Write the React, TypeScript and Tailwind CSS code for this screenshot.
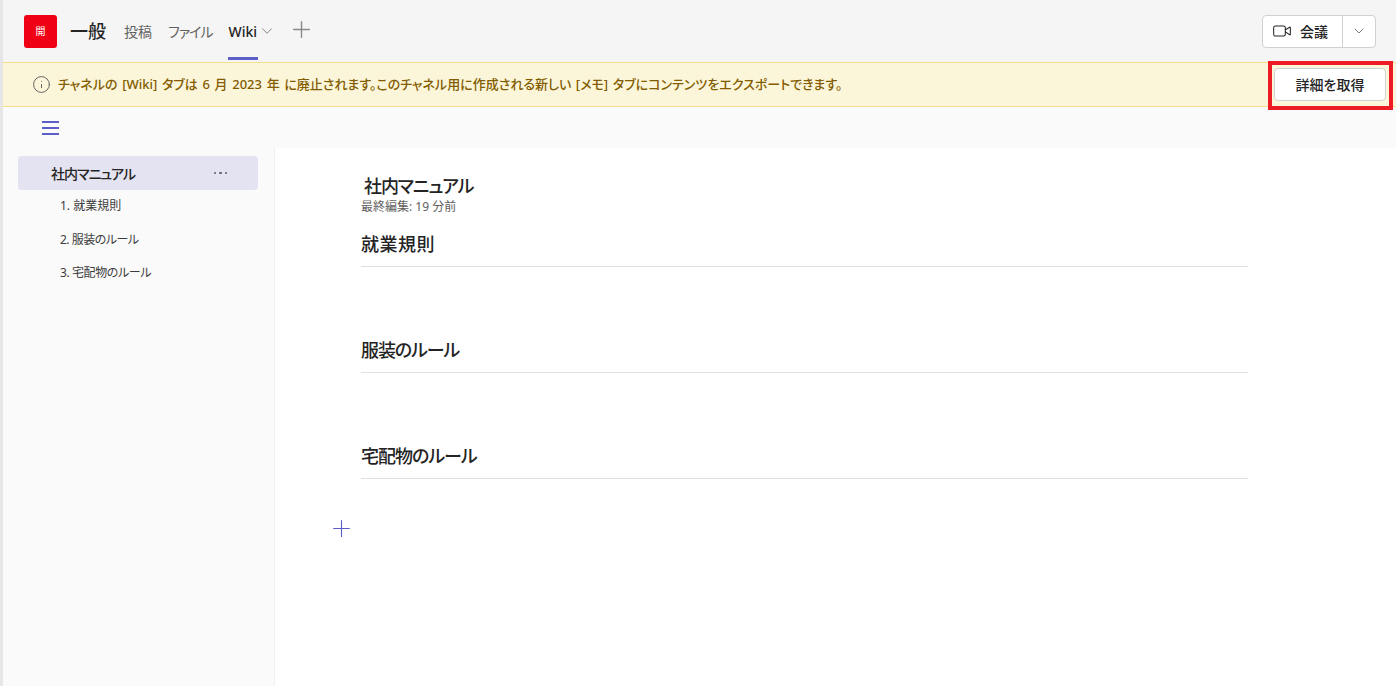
import { ChevronDown, Plus, Video, Info } from "lucide-react";

const font = "font-['Noto_Sans','Noto_Sans_CJK_JP',sans-serif] [font-feature-settings:'palt']";

const Header = () => {
    return (
        <div className="h-[62px] shrink-0 bg-[#f5f5f5] flex items-center justify-between pl-[21px] pr-5">
            <div className="flex items-center h-full">
                <div className="w-[33px] h-[33px] rounded-[3px] bg-[#f00014] text-white text-[10px] flex items-center justify-center">開</div>
                <div className="ml-[13px] text-[18px] font-medium text-[#242424]">一般</div>
                <div className="ml-[18px] text-[14px] text-[#616161]">投稿</div>
                <div className="ml-4 text-[14px] tracking-[-1px] text-[#616161]">ファイル</div>
                <div className="ml-4 h-full relative flex items-center text-[14px] font-medium text-[#242424]">
                    Wiki
                    <ChevronDown className="ml-[1px] w-[18px] h-[18px] text-[#616161]" strokeWidth={1} />
                    <div className="absolute bottom-[2px] left-0 w-[30px] h-[3px] bg-[#5b5fc7]"></div>
                </div>
                <Plus className="ml-[12px] -mt-[3px] w-[27px] h-[27px] text-[#8a8a8a]" strokeWidth={1.25} />
            </div>
            <div className="flex items-center h-[33px] bg-white border border-[#d1d1d1] rounded-[4px]">
                <div className="w-[80px] h-full flex items-center pl-[9px] gap-2 border-r border-[#d1d1d1] text-[14px] font-medium text-[#242424]">
                    <Video className="w-5 h-5" strokeWidth={1.25} />
                    会議
                </div>
                <div className="w-[32px] flex justify-center">
                    <ChevronDown className="w-4 h-4 text-[#616161]" strokeWidth={1.25} />
                </div>
            </div>
        </div>
    )
}

const Banner = () => {
    return (
        <div className="h-[45px] shrink-0 bg-[#fbf6d9] border-y border-[#f4e08a] flex items-center justify-between pl-[29px] pr-[10px] relative">
            <div className="flex items-center text-[13px] font-medium text-[#835b00] [word-spacing:1.3px]">
                <Info className="w-[19px] h-[19px] mr-[7px] text-[#616161]" strokeWidth={1.25} />
                チャネルの [Wiki] タブは 6 月 2023 年 に廃止されます。このチャネル用に作成される新しい [メモ] タブにコンテンツをエクスポートできます。
            </div>
            <button className="w-[112px] h-[33px] bg-white border border-[#d1d1d1] rounded-[4px] text-[14px] font-medium text-[#242424]">詳細を取得</button>
            <div className="absolute -top-[2px] right-[3px] w-[125px] h-[49px] border-4 border-[#ed1c24]"></div>
        </div>
    )
}

const Sidebar = () => {
    const items = [
        { label: "1. 就業規則", cls: "" },
        { label: "2. 服装のルール", cls: "tracking-[-0.5px]" },
        { label: "3. 宅配物のルール", cls: "tracking-[-0.4px]" },
    ];
    return (
        <div className="w-[272px] shrink-0 bg-[#fafafa] border-r border-[#f0f0f0] pl-[15px] pr-4 pt-2">
            <div className="h-[34px] rounded-[4px] bg-[#e4e3f1] flex items-center justify-between pl-[33px] pr-[31px] text-[14px] font-medium text-[#242424]">
                <span className="tracking-[-1px]">社内マニュアル</span>
                <span className="flex gap-[3px]">
                    <i className="w-[2.5px] h-[2.5px] rounded-full bg-[#616161]"></i>
                    <i className="w-[2.5px] h-[2.5px] rounded-full bg-[#616161]"></i>
                    <i className="w-[2.5px] h-[2.5px] rounded-full bg-[#616161]"></i>
                </span>
            </div>
            <div className="-mt-[0.7px]">
                {items.map((item) => (
                    <div key={item.label} className={`h-[33.5px] flex items-center pl-[42px] text-[12px] text-[#3d3d3d] ${item.cls}`}>{item.label}</div>
                ))}
            </div>
        </div>
    )
}

const Section = ({ title, cls }: { title: string; cls: string }) => {
    return (
        <div className="h-[106px]">
            <div className={`pb-[11px] text-[18px] leading-[22px] font-medium text-[#242424] border-b border-[#e0e0e0] ${cls}`}>{title}</div>
        </div>
    )
}

export default function App() {
    return (
        <div className={`${font} w-[1396px] h-[686px] overflow-hidden flex bg-white`}>
            <div className="w-[3px] shrink-0 bg-[#e6e6e6]"></div>
            <div className="flex-1 flex flex-col min-w-0">
                <Header />
                <Banner />
                <div className="h-[41px] shrink-0 bg-[#fafafa] flex items-center pl-[39px]">
                    <svg width="17" height="14" viewBox="0 0 17 14" className="text-[#5b5fc7]" fill="currentColor">
                        <rect x="0" y="0" width="17" height="2" />
                        <rect x="0" y="6" width="17" height="2" />
                        <rect x="0" y="12" width="17" height="2" />
                    </svg>
                </div>
                <div className="flex-1 flex min-h-0">
                    <Sidebar />
                    <div className="flex-1 pl-[86px] pr-[148px] pt-[27px]">
                        <div className="pl-[3px] text-[18px] leading-[22px] font-medium tracking-[-1.1px] text-[#242424]">社内マニュアル</div>
                        <div className="mt-[2px] text-[12px] leading-[16px] text-[#616161]">最終編集: 19 分前</div>
                        <div className="mt-[18px]">
                            <Section title="就業規則" cls="tracking-[0.5px]" />
                            <Section title="服装のルール" cls="tracking-[-1.1px]" />
                            <Section title="宅配物のルール" cls="tracking-[-1px]" />
                        </div>
                        <Plus className="-ml-[33px] -mt-[36px] w-[27px] h-[27px] text-[#5b5fc7]" strokeWidth={1} />
                    </div>
                </div>
            </div>
        </div>
    )
}
